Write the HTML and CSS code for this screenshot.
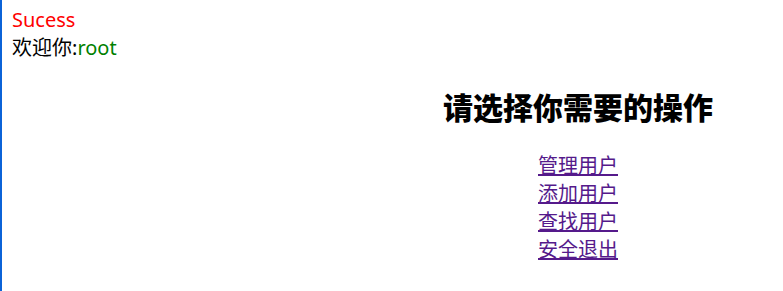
FILE: index.html
```html
<!DOCTYPE html>
<html lang="zh-CN">
<head>
<meta charset="utf-8">
<title>操作</title>
<link rel="stylesheet" href="styles.css">
</head>
<body>
<div class="page">
  <div class="status">
    <div class="ok">Sucess</div>
    <div class="welcome">欢迎你:<span class="user">root</span></div>
  </div>
  <div class="menu">
    <h2 class="title">请选择你需要的操作</h2>
    <ul class="links">
      <li><a href="#">管理用户</a></li>
      <li><a href="#">添加用户</a></li>
      <li><a href="#">查找用户</a></li>
      <li><a href="#">安全退出</a></li>
    </ul>
  </div>
</div>
</body>
</html>
```
FILE: styles.css
```css
html, body {
  margin: 0;
  padding: 0;
  height: 100%;
  background: #ffffff;
}
.page {
  min-height: 100%;
  box-sizing: border-box;
  border-left: 2px solid #0b63d8;
  font-family: "Noto Sans", "Noto Sans CJK SC", sans-serif;
  font-size: 20px;
  line-height: 28px;
  color: #000;
  padding-top: 6px;
  display: flex;
  flex-direction: column;
}
.status {
  padding-left: 10px;
}
.ok {
  color: #ff0000;
}
.user {
  color: #008000;
}
.menu {
  align-self: flex-end;
  width: 410px;
  text-align: center;
  margin-top: 28px;
}
.title {
  margin: 0;
  font-size: 30px;
  line-height: 35px;
  font-weight: 900;
}
.links {
  list-style: none;
  margin: 27px 0 0 0;
  padding: 0;
}
.links a {
  color: #551a8b;
  text-decoration: underline;
}
```
